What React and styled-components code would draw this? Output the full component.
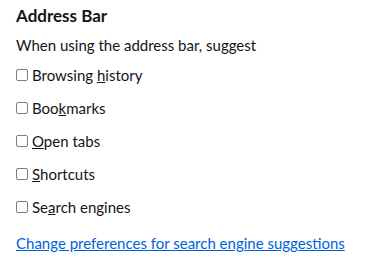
import React from "react";
import styled, { createGlobalStyle } from "styled-components";

const GlobalStyle = createGlobalStyle`
  body {
    margin: 0;
    background: #ffffff;
    font-family: "Segoe UI", Lato, "Noto Sans", sans-serif;
    color: #15141a;
  }
`;

const Section = styled.section`
  display: flex;
  flex-direction: column;
  padding: 5px 16px 0;
`;

const Heading = styled.h2`
  margin: 0;
  font-size: 17px;
  font-weight: 700;
  line-height: 22px;
`;

const Description = styled.div`
  margin-top: 8px;
  font-size: 15px;
  line-height: 20px;
`;

const Options = styled.div`
  display: flex;
  flex-direction: column;
  gap: 13px;
  margin-top: 10px;
`;

const Row = styled.label`
  display: flex;
  align-items: center;
  height: 20px;
  font-size: 15px;
`;

const Box = styled.span`
  box-sizing: border-box;
  width: 12px;
  height: 12px;
  margin-right: 4px;
  border: 1px solid #7c7c86;
  border-radius: 2px;
  background: #ffffff;
`;

const Key = styled.span`
  text-decoration: underline;
`;

const Link = styled.a`
  margin-top: 16px;
  font-size: 15px;
  line-height: 20px;
  color: #0061e0;
  text-decoration: underline;
`;

const options = [
  ["Browsing ", "h", "istory"],
  ["Boo", "k", "marks"],
  ["", "O", "pen tabs"],
  ["", "S", "hortcuts"],
  ["Se", "a", "rch engines"],
];

export default function App() {
  return (
    <>
      <GlobalStyle />
      <Section>
        <Heading>Address Bar</Heading>
        <Description>When using the address bar, suggest</Description>
        <Options>
          {options.map(([before, key, after]) => (
            <Row key={before + key}>
              <Box />
              <span>
                {before}
                <Key>{key}</Key>
                {after}
              </span>
            </Row>
          ))}
        </Options>
        <Link href="#">Change preferences for search engine suggestions</Link>
      </Section>
    </>
  );
}
